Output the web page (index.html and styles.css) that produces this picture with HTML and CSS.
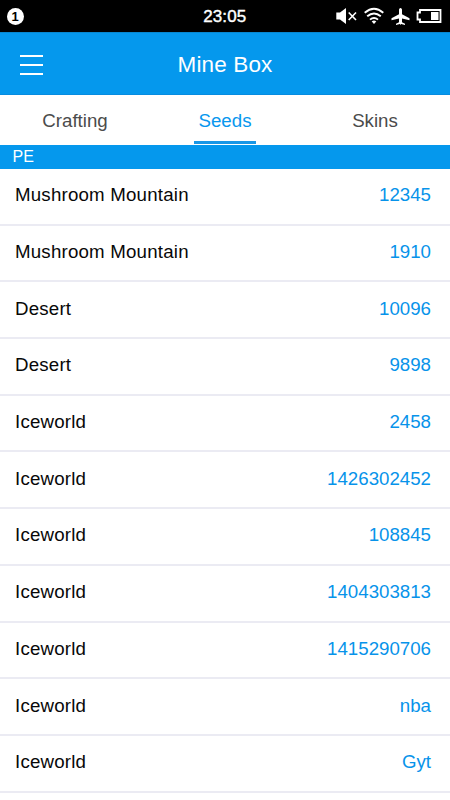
FILE: index.html
```html
<!DOCTYPE html>
<html lang="en"><head><meta charset="utf-8"><title>Mine Box</title><link rel="stylesheet" href="styles.css"></head>
<body>
<div class="status"><span class="badge">1</span><span class="time">23:05</span>
<svg class="sys" width="108" height="20" viewBox="0 0 108 20" fill="#fff">
<path d="M1.300 6.500h3.700l6-4.500v16l-6-4.500H1.300z"/><path d="M13.700 6.500l7.300 7.500M21 6.500l-7.300 7.500" stroke="#fff" stroke-width="1.600"/>
<g fill="none" stroke="#fff" stroke-width="1.900"><path d="M29.700 6.800q9.300-8 18.600 0M32.200 10.300q6.800-5.800 13.600 0M35 13.600q4-3.400 8 0"/></g><path d="M36.700 15.400q2.300-1.800 4.600 0L39 18z"/>
<path d="M65.500 2c-1 0-1.500 1-1.500 2v4.200L56.500 12.300v2l7.500-1.800v3.700L61 17.700v1.300l3.900-.9.600 1 .6-1 3.900.9v-1.300l-3-1.500v-3.700l7.500 1.800v-2L67 8.200V4c0-1-.5-2-1.500-2z"/>
<path d="M85 4h20.500v12H85v-2.500h-2.500v-7H85z" fill="none" stroke="#fff" stroke-width="1.800"/><path d="M96 6h7.500v8H96z"/>
</svg></div>
<header class="header"><div class="menu"><i></i><i></i><i></i></div><h1>Mine Box</h1></header>
<nav class="tabs"><span>Crafting</span><span class="active">Seeds</span><span>Skins</span></nav>
<div class="section">PE</div>
<main class="list">
<div class="row"><span>Mushroom Mountain</span><b>12345</b></div>
<div class="row"><span>Mushroom Mountain</span><b>1910</b></div>
<div class="row"><span>Desert</span><b>10096</b></div>
<div class="row"><span>Desert</span><b>9898</b></div>
<div class="row"><span>Iceworld</span><b>2458</b></div>
<div class="row"><span>Iceworld</span><b>1426302452</b></div>
<div class="row"><span>Iceworld</span><b>108845</b></div>
<div class="row"><span>Iceworld</span><b>1404303813</b></div>
<div class="row"><span>Iceworld</span><b>1415290706</b></div>
<div class="row"><span>Iceworld</span><b>nba</b></div>
<div class="row"><span>Iceworld</span><b>Gyt</b></div>
</main>
</body></html>
```
FILE: styles.css
```css
* { box-sizing: border-box; }
body { margin: 0; height: 800px; overflow: hidden; background: #fff; color: #080808; font: 18.7px "Liberation Sans", Arial, sans-serif; }
.status { height: 32px; background: #000; color: #fff; display: grid; grid-template-columns: 1fr auto 1fr; align-items: center; padding: 0 7px 0 6.5px; }
.badge { width: 17px; height: 17px; border-radius: 50%; background: #fff; color: #000; font-size: 13px; font-weight: bold; line-height: 17px; text-align: center; }
.time { font-size: 17px; padding-top: 2px; letter-spacing: .1px; -webkit-text-stroke: .4px #fff; }
.sys { justify-self: end; }
.header { height: 63px; background: #0598ed; border-top: 1px solid #0787d1; border-bottom: 1px solid #078ce0; color: #fff; display: grid; grid-template-columns: 1fr auto 1fr; align-items: center; padding: 2px 20px 0; }
.header h1 { margin: 0; font-size: 22.5px; font-weight: 400; letter-spacing: .15px; }
.menu { width: 23px; height: 20px; display: flex; flex-direction: column; justify-content: space-between; }
.menu i { height: 2px; background: #fff; }
.tabs { height: 50px; display: grid; grid-template-columns: repeat(3, 1fr); justify-items: center; color: #4b4b4b; }
.tabs span { height: 49px; line-height: 51px; padding: 0 5px; }
.tabs .active { padding: 0 4.5px; color: #0897ee; border-bottom: 3px solid #1997e6; }
.section { height: 24px; line-height: 24px; padding-left: 12.5px; font-size: 16px; background: #0598ed; color: #fff; }
.row { height: 56.7px; border-bottom: 2px solid #ebebf3; padding: 0 19px 2px 15px; display: flex; align-items: center; justify-content: space-between; }
.row span { letter-spacing: .2px; }
.row b { font-weight: 400; color: #0793ea; }
```
